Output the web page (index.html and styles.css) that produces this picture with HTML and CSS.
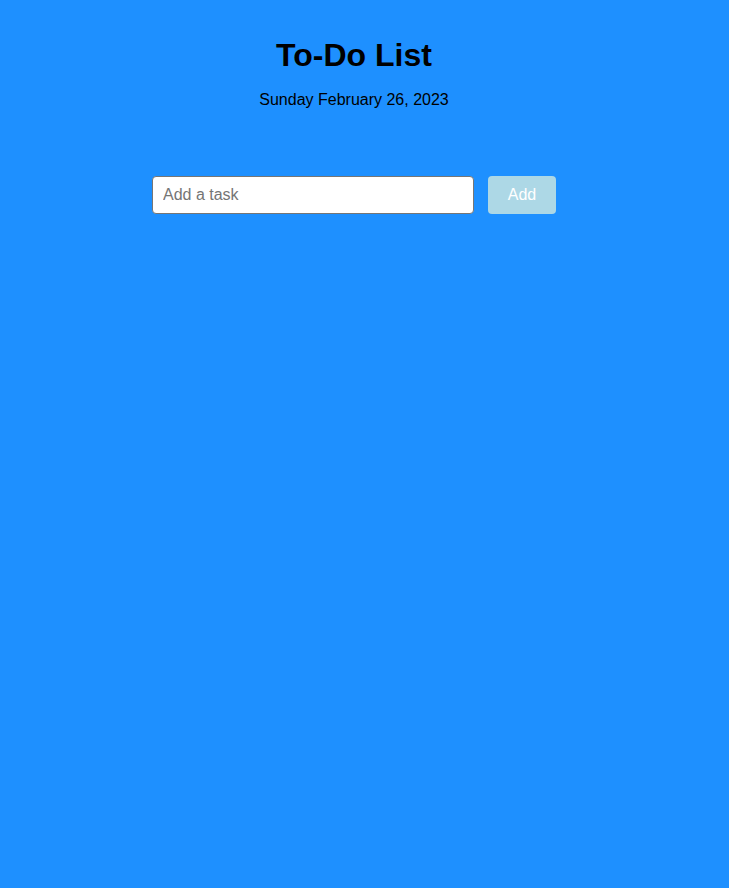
FILE: index.html
```html
<!DOCTYPE html>
<html lang="en">
<head>
<meta charset="utf-8">
<title>To-Do List</title>
<link rel="stylesheet" href="styles.css">
</head>
<body>
<div class="app">
  <h1 class="title">To-Do List</h1>
  <p class="date">Sunday February 26, 2023</p>
  <form class="task-form">
    <input class="task-input" type="text" placeholder="Add a task">
    <button class="add-btn" type="button">Add</button>
  </form>
</div>
</body>
</html>
```
FILE: styles.css
```css
html, body {
  margin: 0;
  padding: 0;
  height: 100%;
}
body {
  background: #1E90FF;
  font-family: "Liberation Sans", Arial, sans-serif;
  color: #000;
}
.app {
  width: 708px;
  padding-top: 37px;
  display: flex;
  flex-direction: column;
  align-items: center;
}
.title {
  margin: 0;
  font-size: 32px;
  line-height: 37px;
  font-weight: bold;
}
.date {
  margin: 17px 0 0;
  font-size: 16px;
  line-height: 18px;
}
.task-form {
  margin-top: 67px;
  display: flex;
  gap: 14px;
}
.task-input {
  box-sizing: border-box;
  width: 322px;
  height: 38px;
  padding: 0 10px;
  border: 1px solid #767676;
  border-radius: 4px;
  background: #fff;
  font-family: "Liberation Sans", Arial, sans-serif;
  font-size: 16px;
  color: #000;
  outline: none;
}
.task-input::placeholder {
  color: #757575;
}
.add-btn {
  box-sizing: border-box;
  width: 68px;
  height: 38px;
  border: none;
  border-radius: 4px;
  background: #ADD8E6;
  color: #fff;
  font-family: "Liberation Sans", Arial, sans-serif;
  font-size: 16px;
  padding: 0;
}
```
